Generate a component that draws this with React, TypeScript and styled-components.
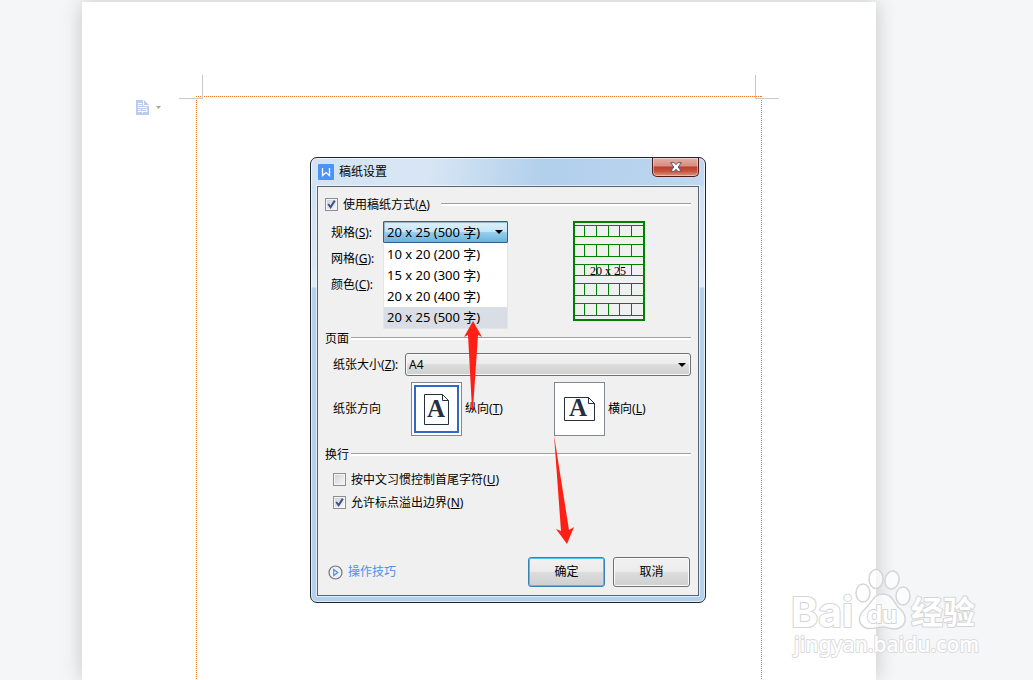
import React from "react";
import styled, { createGlobalStyle, css } from "styled-components";

const uiFont = `"Noto Sans", "Noto Sans CJK SC", sans-serif`;

const GlobalStyle = createGlobalStyle`
  * { box-sizing: border-box; }
  body {
    margin: 0;
    background: #f5f6f8;
    color: #000;
    font: 12px/18px ${uiFont};
  }
  button, select, input { font: inherit; color: inherit; margin: 0; }
`;

const Workspace = styled.main`
  position: relative;
  height: 100vh;
  padding: 2px 0 0 82px;
  overflow: hidden;
`;

const Sheet = styled.article`
  position: relative;
  width: 794px;
  height: 100%;
  padding: 94px 114px 0;
  background: #fff;
  box-shadow: 0 0 20px rgba(0, 0, 0, 0.2);
`;

const TextFrame = styled.div`
  position: relative;
  height: 100%;
  background:
    repeating-linear-gradient(90deg, #ed7d31 0 1px, transparent 1px 2px) top / 100% 1px no-repeat,
    repeating-linear-gradient(180deg, #ed7d31 0 1px, transparent 1px 2px) left / 1px 100% no-repeat,
    repeating-linear-gradient(180deg, #ed7d31 0 1px, transparent 1px 2px) right / 1px 100% no-repeat;
`;

const CropMark = styled.span<{ $side: "left" | "right" }>`
  position: absolute;
  top: -21px;
  width: 24px;
  height: 24px;
  border-bottom: 1px solid #c8c8c8;
  ${({ $side }) =>
    $side === "left"
      ? css`left: -17px; border-right: 1px solid #c8c8c8;`
      : css`right: -17px; border-left: 1px solid #c8c8c8;`}
`;

const OutlineButton = styled.button`
  position: absolute;
  top: 2px;
  left: -60px;
  display: flex;
  align-items: center;
  gap: 7px;
  height: 18px;
  padding: 0;
  border: 0;
  background: none;
`;

const Dialog = styled.section`
  position: absolute;
  top: 157px;
  left: 310px;
  width: 396px;
  padding: 0 6px 6px;
  border: 1px solid #20262e;
  border-radius: 7px;
  background:
    linear-gradient(180deg, transparent 28px, #cfe0f2 28px, #d6e5f4 90px, #dfebf7 129px, #b3d0ec 130px),
    linear-gradient(100deg, #d3e3f3 0%, #d8e6f4 25%, #b1cfeb 50%, #b8d3ee 70%, #cadef3 100%);
  box-shadow: inset 0 0 0 1px rgba(255, 255, 255, 0.6);
`;

const TitleBar = styled.header`
  display: flex;
  align-items: flex-start;
  height: 28px;
`;

const Title = styled.h1`
  display: flex;
  flex: 1;
  align-items: center;
  gap: 5px;
  height: 28px;
  margin: 0;
  padding-left: 1px;
  font-size: 12px;
  font-weight: 400;
`;

const CloseButton = styled.button`
  display: grid;
  place-items: center;
  width: 47px;
  height: 19px;
  padding: 0;
  border: 1px solid #4d1c18;
  border-top: 0;
  border-radius: 0 0 5px 5px;
  background: linear-gradient(#e5aea5 0, #d78d83 8px, #bd3f2c 9px, #c5513c 13px, #dd9480 100%);
  box-shadow: inset 0 0 0 1px rgba(255, 255, 255, 0.4);
`;

const Client = styled.form`
  display: flex;
  flex-direction: column;
  padding: 8px 7px;
  border: 1px solid #566472;
  background: #f0f0f0;
  box-shadow: 0 0 0 1px rgba(255, 255, 255, 0.6);
`;

const Caption = styled.span`
  padding-top: 2px;
`;

const FieldLabel = styled.label`
  padding-top: 2px;
`;

const SectionHead = styled.div<{ $gap: number }>`
  display: flex;
  align-items: center;
  gap: ${({ $gap }) => $gap}px;
  height: 18px;
  white-space: nowrap;

  &::after {
    content: "";
    flex: 1;
    height: 2px;
    border-top: 1px solid #a0a0a0;
    background: #fff;
  }
`;

const SectionTitle = styled.h2`
  margin: 0;
  padding-top: 2px;
  font-size: 12px;
  font-weight: 400;
`;

const CheckLabel = styled.label`
  display: flex;
  align-items: center;
  gap: 5px;
  height: 18px;
`;

const CheckBox = styled.input`
  appearance: none;
  width: 13px;
  height: 13px;
  padding: 1px;
  border: 1px solid #8e8f8f;
  background: linear-gradient(135deg, #cfd3da, #f6f6f6) content-box, #f4f4f4;

  &:checked {
    background:
      url("data:image/svg+xml,%3Csvg xmlns='http://www.w3.org/2000/svg' viewBox='0 0 11 11'%3E%3Cpath d='M2.2 5 4.6 8.200 8.800 1.600' fill='none' stroke='%233d5295' stroke-width='2'/%3E%3C/svg%3E") border-box center / 11px 11px no-repeat,
      linear-gradient(135deg, #cfd3da, #f6f6f6) content-box,
      #f4f4f4;
  }
`;

const SpecArea = styled.div`
  display: flex;
  justify-content: space-between;
  height: 100px;
  margin: 8px 0;
  padding: 0 46px 0 6px;
`;

const SpecFields = styled.div`
  display: grid;
  grid-template-columns: 52px 125px;
  grid-auto-rows: 22px;
  row-gap: 4px;
  align-items: center;
`;

const SpecCombo = styled.div`
  position: relative;
`;

const ComboSelect = styled.select<{ $open?: boolean }>`
  appearance: none;
  display: block;
  width: 100%;
  height: ${({ $open }) => ($open ? 22 : 23)}px;
  padding: 0 3px;
  border: 1px solid ${({ $open }) => ($open ? "#2c628b" : "#707070")};
  border-radius: ${({ $open }) => ($open ? 1 : 3)}px;
  background:
    url("data:image/svg+xml,%3Csvg xmlns='http://www.w3.org/2000/svg' viewBox='0 0 8 4'%3E%3Cpath d='M0 0H8L4 4Z'/%3E%3C/svg%3E") right 4px center / 8px 4px no-repeat,
    ${({ $open }) =>
      $open
        ? "linear-gradient(#dff1fa, #c4e5f6 50%, #98d1ef 50%, #6bb2d9)"
        : "linear-gradient(#f2f2f2, #ebebeb 50%, #dddddd 50%, #cfcfcf)"};
  box-shadow: ${({ $open }) => ($open ? "inset 1px 1px 1px #8fb5cb" : "inset 0 0 0 1px #fafafa")};
  font-size: ${({ $open }) => ($open ? 13 : 12)}px;
`;

const Options = styled.ul`
  position: absolute;
  z-index: 1;
  top: 100%;
  left: 0;
  width: 100%;
  margin: 0;
  padding: 1px 0 0;
  border: 1px solid #e3e5e8;
  border-top: 0;
  background: #fff;
  list-style: none;
  font-size: 13px;
  line-height: 21px;
`;

const Option = styled.li`
  padding: 0 3px;
  background: ${(p) => (p["aria-selected"] ? "#d9dee6" : "none")};
`;

const PaperPreview = styled.svg`
  display: block;
  width: 72px;
  height: 100px;
`;

const SizeRow = styled.div`
  display: grid;
  grid-template-columns: 72px 1fr;
  align-items: center;
  margin-top: 6px;
  padding-left: 8px;
`;

const OrientationRow = styled.fieldset`
  display: grid;
  grid-template-columns: 78px 143px 1fr;
  align-items: center;
  margin: 6px 0 9px;
  padding: 0 0 0 8px;
  border: 0;
`;

const OrientationChoice = styled.label`
  display: flex;
  align-items: center;
  gap: 3px;
`;

const HiddenRadio = styled.input`
  appearance: none;
  position: absolute;
`;

const OrientationTile = styled.span<{ $selected?: boolean }>`
  display: grid;
  place-items: center;
  width: 51px;
  height: 54px;
  border: 1px solid #828790;
  background: #fff;
  ${({ $selected }) =>
    $selected &&
    css`
      outline: 2px solid #2f69c4;
      outline-offset: -5px;
    `}
`;

const PaperIcon = styled.svg`
  display: block;
  overflow: visible;
  fill: none;
  stroke: #262f3d;
`;

const WrapOptions = styled.div`
  display: grid;
  gap: 5px;
  margin: 7px 0 46px;
  padding-left: 8px;
`;

const Footer = styled.footer`
  display: flex;
  align-items: center;
  gap: 8px;
  padding-right: 1px;
`;

const TipsLink = styled.a`
  display: flex;
  align-items: center;
  gap: 5px;
  margin: 0 auto 0 3px;
  color: #4a90f0;
  text-decoration: none;
`;

const PushButton = styled.button<{ $primary?: boolean }>`
  width: 77px;
  height: 30px;
  padding: 0;
  border: 1px solid ${({ $primary }) => ($primary ? "#3c7fb1" : "#707070")};
  border-radius: 3px;
  background: linear-gradient(#f2f2f2, #ebebeb 50%, #dddddd 50%, #cfcfcf);
  box-shadow: inset 0 0 0 1px ${({ $primary }) => ($primary ? "#48c4ee" : "#fbfbfb")};
`;

const Annotations = styled.svg`
  position: absolute;
  z-index: 2;
  top: 320px;
  left: 460px;
  width: 120px;
  height: 230px;
  pointer-events: none;
`;

const Watermark = styled.svg`
  position: absolute;
  top: 564px;
  left: 786px;
  width: 200px;
  height: 100px;
  overflow: visible;
`;

const specs = ["10 x 20 (200 字)", "15 x 20 (300 字)", "20 x 20 (400 字)", "20 x 25 (500 字)"];

const Key = ({ k }: { k: string }) => (
  <>
    (<u>{k}</u>)
  </>
);

function LetterA({ x, y }: { x: number; y: number }) {
  return (
    <text x={x} y={y} textAnchor="middle" fontFamily='"Liberation Serif", serif' fontWeight="700" fontSize="25" fill="#262f3d" stroke="none">
      A
    </text>
  );
}

function PortraitIcon() {
  return (
    <PaperIcon width="25" height="31" viewBox="0 0 25 31" aria-hidden="true">
      <path d="M.5.5h18l6 6v24H.5ZM18.500.5v6h6" />
      <LetterA x={12} y={23} />
    </PaperIcon>
  );
}

function LandscapeIcon() {
  return (
    <PaperIcon width="31" height="24" viewBox="0 0 31 24" aria-hidden="true">
      <path d="M.5.5h24l6 6v17H.5ZM24.500.5v6h6" />
      <LetterA x={14} y={19} />
    </PaperIcon>
  );
}

const gridRows = [
  [4, 15],
  [23, 35],
  [43, 54],
  [62, 74],
  [82, 94],
];

function ManuscriptPreview() {
  return (
    <PaperPreview viewBox="0 0 72 100" role="img" aria-label="20 x 25">
      <g fill="none" stroke="#008000">
        <rect x="1" y="1" width="70" height="98" strokeWidth="2" />
        {gridRows.map(([top, bottom]) => (
          <path
            key={top}
            d={`M1 ${top}.5H71M1 ${bottom}.5H71` + [11, 23, 35, 46, 58].map((x) => `M${x}.5 ${top}V${bottom}`).join("")}
          />
        ))}
      </g>
      <text x="35" y="54" textAnchor="middle" fontFamily='"Liberation Serif", serif' fontSize="12">
        20 x 25
      </text>
    </PaperPreview>
  );
}

function BaiduWatermark() {
  return (
    <Watermark viewBox="0 0 200 100" aria-label="Baidu 经验">
      <g fill="#fff" fillOpacity="0.7" stroke="#d4d5d6" strokeWidth="1.500">
        <ellipse cx="77" cy="29" rx="7" ry="9" />
        <ellipse cx="90" cy="15" rx="7" ry="9.500" />
        <ellipse cx="106" cy="16" rx="7" ry="9" transform="rotate(14 106 16)" />
        <ellipse cx="117" cy="32" rx="7" ry="9" />
        <path d="M97 30C87 30 86 39 79 45C71 52 72 61 80 64C86 66 91 63 97 63S107 67 113 64C121 61 121 51 114 45C107 39 107 30 97 30Z" />
      </g>
      <g fill="#fff" stroke="#d4d5d6" strokeWidth="2" strokeLinejoin="round" paintOrder="stroke" fontWeight="700">
        <text x="5" y="63" fontFamily="Inter, sans-serif" fontSize="41">Bai</text>
        <text x="125" y="60" fontFamily='"Noto Sans CJK SC", sans-serif' fontSize="32">经验</text>
        <text x="96" y="59" textAnchor="middle" fontFamily="Inter, sans-serif" fontSize="24">du</text>
      </g>
      <text
        x="8"
        y="88"
        fill="#fff"
        stroke="#dbdcde"
        strokeWidth="2"
        strokeLinejoin="round"
        paintOrder="stroke"
        fontFamily='"Noto Sans", sans-serif'
        fontSize="21"
        fontWeight="500"
      >
        jingyan.baidu.com
      </text>
    </Watermark>
  );
}

export default function App() {
  return (
    <Workspace>
      <GlobalStyle />
      <Sheet>
        <TextFrame>
          <CropMark $side="left" />
          <CropMark $side="right" />
          <OutlineButton type="button" aria-label="目录">
            <svg width="13" height="15" viewBox="0 0 13 15" aria-hidden="true">
              <path d="M0 0h8l5 5v10H0Z" fill="#bacdea" />
              <path d="M7.500 0v5.500H13M2 3.500h4M2 5.500h4M2 7.500h9M2 9.500h3M2 11.500h9V9.500H6.500M6.500 11.500v1.500" fill="none" stroke="#fff" />
            </svg>
            <svg width="5" height="3" viewBox="0 0 5 3" aria-hidden="true">
              <path d="M0 0h5L2.500 3Z" fill="#a6a6a6" />
            </svg>
          </OutlineButton>
        </TextFrame>
      </Sheet>

      <Dialog role="dialog" aria-labelledby="dialog-title">
        <TitleBar>
          <Title id="dialog-title">
            <svg width="16" height="16" viewBox="0 0 16 16" aria-hidden="true">
              <rect width="16" height="16" rx="1" fill="#4b93f7" />
              <path d="M4.500 4v7.500L8 8.500l3.500 3V4" fill="none" stroke="#fff" strokeWidth="1.300" />
            </svg>
            稿纸设置
          </Title>
          <CloseButton type="button" aria-label="关闭">
            <svg width="12" height="10" viewBox="0 0 12 10" aria-hidden="true">
              <path d="M.7.7h3.500L6 2.700 7.800.7h3.500L8.200 5l3.100 4.300H7.800L6 7.300 4.200 9.300H.7L3.800 5Z" fill="#fff" stroke="#535666" />
            </svg>
          </CloseButton>
        </TitleBar>

        <Client onSubmit={(e) => e.preventDefault()}>
          <SectionHead $gap={11}>
            <CheckLabel>
              <CheckBox type="checkbox" defaultChecked />
              <Caption>使用稿纸方式<Key k="A" /></Caption>
            </CheckLabel>
          </SectionHead>

          <SpecArea>
            <SpecFields>
              <FieldLabel htmlFor="spec">规格<Key k="S" />:</FieldLabel>
              <SpecCombo>
                <ComboSelect id="spec" $open defaultValue={specs[3]}>
                  {specs.map((s) => <option key={s}>{s}</option>)}
                </ComboSelect>
                <Options role="listbox" aria-label="规格">
                  {specs.map((s, i) => (
                    <Option key={s} role="option" aria-selected={i === 3}>{s}</Option>
                  ))}
                </Options>
              </SpecCombo>
              <Caption>网格<Key k="G" />:</Caption>
              <span />
              <Caption>颜色<Key k="C" />:</Caption>
            </SpecFields>
            <ManuscriptPreview />
          </SpecArea>

          <SectionHead $gap={2}>
            <SectionTitle>页面</SectionTitle>
          </SectionHead>
          <SizeRow>
            <label htmlFor="size">纸张大小<Key k="Z" />:</label>
            <ComboSelect id="size" defaultValue="A4">
              <option>A4</option>
            </ComboSelect>
          </SizeRow>
          <OrientationRow aria-label="纸张方向">
            <span>纸张方向</span>
            <OrientationChoice>
              <HiddenRadio type="radio" name="orientation" defaultChecked />
              <OrientationTile $selected><PortraitIcon /></OrientationTile>
              <span>纵向<Key k="T" /></span>
            </OrientationChoice>
            <OrientationChoice>
              <HiddenRadio type="radio" name="orientation" />
              <OrientationTile><LandscapeIcon /></OrientationTile>
              <span>横向<Key k="L" /></span>
            </OrientationChoice>
          </OrientationRow>

          <SectionHead $gap={2}>
            <SectionTitle>换行</SectionTitle>
          </SectionHead>
          <WrapOptions>
            <CheckLabel>
              <CheckBox type="checkbox" />
              <Caption>按中文习惯控制首尾字符<Key k="U" /></Caption>
            </CheckLabel>
            <CheckLabel>
              <CheckBox type="checkbox" defaultChecked />
              <Caption>允许标点溢出边界<Key k="N" /></Caption>
            </CheckLabel>
          </WrapOptions>

          <Footer>
            <TipsLink href="#tips">
              <svg width="15" height="15" viewBox="0 0 15 15" fill="none" aria-hidden="true">
                <circle cx="7.500" cy="7.500" r="6.500" stroke="#6b7482" strokeWidth="1.200" />
                <path d="M5.700 4.500v6L9.800 7.500Z" stroke="#4a90f0" strokeWidth="1.200" />
              </svg>
              操作技巧
            </TipsLink>
            <PushButton type="submit" $primary>确定</PushButton>
            <PushButton type="button">取消</PushButton>
          </Footer>
        </Client>
      </Dialog>

      <Annotations viewBox="460 320 120 230" aria-hidden="true">
        <path d="M473 321L482 337L478 335L473 409H472L468 335L464 337Z" fill="#ff2015" />
        <path d="M554 435L569 530L574 527L567 544L556 529L561 531Z" fill="#ff2015" />
      </Annotations>
      <BaiduWatermark />
    </Workspace>
  );
}
